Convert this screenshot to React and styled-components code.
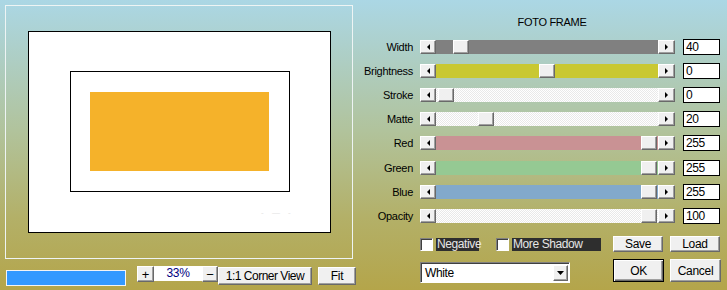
import React from 'react';
import styled, { createGlobalStyle, css } from 'styled-components';

const Global = createGlobalStyle`
  html, body { margin: 0; padding: 0; }
  body { width: 727px; height: 290px; overflow: hidden; }
`;

const raised = css`
  box-sizing: border-box;
  background: #f0f0f0;
  border: 1px solid;
  border-color: #ffffff #696969 #696969 #ffffff;
  box-shadow: inset -1px -1px 0 #a0a0a0;
`;

const sunken = css`
  box-sizing: border-box;
  background: #ffffff;
  border: 1px solid;
  border-color: #808080 #ffffff #ffffff #808080;
  box-shadow: inset 1px 1px 0 #404040;
`;

const Window = styled.div`
  width: 727px;
  height: 290px;
  display: flex;
  box-sizing: border-box;
  background: linear-gradient(to bottom, #abd7e5 0%, #b1c39c 45%, #b3b068 75%, #b4a54a 100%);
  font-family: "Liberation Sans", Arial, sans-serif;
  font-size: 11px;
  letter-spacing: -0.3px;
  color: #000;
`;

/* ---------- left: preview ---------- */
const LeftColumn = styled.div`
  width: 360px;
  padding: 5px 0 0 5px;
  box-sizing: border-box;
  display: flex;
  flex-direction: column;
`;

const PreviewFrame = styled.div`
  width: 348px;
  height: 254px;
  box-sizing: border-box;
  border: 1px solid #eef4f4;
  display: flex;
  align-items: center;
  justify-content: center;
  padding-left: 1px;
`;

const Paper = styled.div`
  position: relative;
  width: 303px;
  height: 202px;
  box-sizing: border-box;
  background: #fff;
  border: 1px solid #000;
  display: flex;
  align-items: center;
  justify-content: center;
  padding-bottom: 1px;
`;

const StrokeBox = styled.div`
  width: 220px;
  height: 121px;
  box-sizing: border-box;
  border: 1px solid #000;
  display: flex;
  align-items: center;
  justify-content: center;
`;

const Photo = styled.div`
  width: 179px;
  height: 79px;
  background: #f5b22a;
`;

const Marks = styled.span`
  position: absolute;
  left: 232px;
  top: 176px;
  font-size: 8px;
  letter-spacing: 3px;
  color: #e2e2e2;
`;

const Toolbar = styled.div`
  display: flex;
  align-items: flex-start;
  margin-top: 7px;
`;

const Progress = styled.div`
  width: 120px;
  height: 16px;
  margin: 4px 0 0 1px;
  box-sizing: border-box;
  border: 1px solid #f4f4f4;
  background: #3399ff;
`;

const SmallButton = styled.button`
  ${raised};
  width: ${p => p.$w}px;
  height: ${p => p.$h}px;
  margin: ${p => p.$m || 0};
  padding: 0;
  font-family: inherit;
  font-size: ${p => p.$fs || 11}px;
  letter-spacing: ${p => (p.$tight ? '-0.5px' : '-0.3px')};
  color: #000;
  display: flex;
  align-items: center;
  justify-content: center;
  line-height: 1;
`;

const ZoomField = styled.div`
  width: 48px;
  height: 15px;
  background: #fff;
  color: #000080;
  font-size: 12px;
  line-height: 15px;
  text-align: center;
  letter-spacing: -0.4px;
`;

/* ---------- right: controls ---------- */
const RightColumn = styled.div`
  flex: 1;
  padding-top: 14px;
  display: flex;
  flex-direction: column;
`;

const Title = styled.div`
  padding-left: 17px;
  text-align: center;
  height: 16px;
  line-height: 16px;
  margin-bottom: 4.5px;
`;

const Row = styled.div`
  display: flex;
  align-items: center;
  height: 24.2px;
`;

const Label = styled.div`
  width: 53px;
  margin-right: 7px;
  text-align: right;
  white-space: nowrap;
`;

const Slider = styled.div`
  display: flex;
  width: 255px;
  height: 14px;
`;

const ArrowButton = styled.div`
  ${raised};
  width: ${p => p.$w}px;
  height: 14px;
  display: flex;
  align-items: center;
  justify-content: center;
`;

const dither = css`
  background-color: #f6f6f6;
  background-image: repeating-conic-gradient(#ffffff 0 25%, #e9e9e9 0 50%);
  background-size: 2px 2px;
`;

const Track = styled.div`
  position: relative;
  flex: 1;
  height: 14px;
  ${p => (p.$color ? css`background: ${p.$color};` : dither)}
`;

const Thumb = styled.div`
  ${raised};
  position: absolute;
  top: 0;
  left: ${p => p.$pos}px;
  width: 16px;
  height: 14px;
`;

const ValueBox = styled.div`
  box-sizing: border-box;
  margin-left: 8px;
  width: 37px;
  height: 16px;
  background: #fff;
  border: 1px solid #000;
  padding-left: 2px;
  line-height: 14px;
  font-size: 12px;
  letter-spacing: -0.4px;
`;

const OptionsRow = styled.div`
  display: flex;
  align-items: center;
  height: 16px;
  margin-top: 8px;
  padding-left: 60px;
`;

const CheckBox = styled.div`
  ${sunken};
  width: 13px;
  height: 13px;
  margin-right: 3px;
`;

const DarkLabel = styled.div`
  box-sizing: border-box;
  height: 13px;
  line-height: 13px;
  width: ${p => p.$w}px;
  padding-left: 1px;
  background: #2e2e2e;
  color: #e6e6e6;
  margin-right: ${p => p.$mr}px;
  font-size: 12px;
  letter-spacing: -0.4px;
  white-space: nowrap;
`;

const DialogButton = styled.button`
  ${raised};
  width: ${p => p.$w}px;
  height: ${p => p.$h}px;
  margin-left: ${p => p.$ml || 0}px;
  margin-top: ${p => p.$mt || 0}px;
  padding: 0;
  font-family: inherit;
  font-size: 12px;
  letter-spacing: -0.3px;
  color: #000;
  display: flex;
  align-items: center;
  justify-content: center;
  ${p => p.$default && css`
    border-color: #000;
    box-shadow: inset 1px 1px 0 #ffffff, inset -1px -1px 0 #696969, inset -2px -2px 0 #a0a0a0;
  `}
`;

const BottomRow = styled.div`
  display: flex;
  align-items: flex-start;
  margin-top: 7px;
  padding-left: 60px;
`;

const Select = styled.div`
  ${sunken};
  width: 150px;
  height: 21px;
  margin-top: 3px;
  margin-right: 43px;
  display: flex;
  align-items: center;
  justify-content: space-between;
  padding: 0 1px 0 4px;
  font-size: 12px;
  letter-spacing: -0.4px;
`;

const SelectArrow = styled.div`
  ${raised};
  width: 15px;
  height: 16px;
  display: flex;
  align-items: center;
  justify-content: center;
`;

const Tri = ({ dir }) => {
  const pts = dir === 'left' ? '3,0 3,6 0,3' : dir === 'right' ? '0,0 0,6 3,3' : '0,0 7,0 3.5,4';
  const w = dir === 'down' ? 7 : 3;
  const h = dir === 'down' ? 4 : 6;
  return (
    <svg width={w} height={h} viewBox={`0 0 ${w} ${h}`}>
      <polygon points={pts} fill="#000" />
    </svg>
  );
};

const sliders = [
  { name: 'Width', value: '40', color: '#808080', pos: 17 },
  { name: 'Brightness', value: '0', color: '#c9c832', pos: 103 },
  { name: 'Stroke', value: '0', color: null, pos: 2 },
  { name: 'Matte', value: '20', color: null, pos: 42 },
  { name: 'Red', value: '255', color: '#c99294', pos: 205 },
  { name: 'Green', value: '255', color: '#95c993', pos: 205 },
  { name: 'Blue', value: '255', color: '#82a9cb', pos: 205 },
  { name: 'Opacity', value: '100', color: null, pos: 205 },
];

export default function App() {
  return (
    <Window>
      <Global />
      <LeftColumn>
        <PreviewFrame>
          <Paper>
            <StrokeBox>
              <Photo />
            </StrokeBox>
            <Marks>- — -</Marks>
          </Paper>
        </PreviewFrame>
        <Toolbar>
          <Progress />
          <SmallButton $w={17} $h={16} $m="0 0 0 11px" $fs={13}>+</SmallButton>
          <ZoomField>33%</ZoomField>
          <SmallButton $w={16} $h={16} $fs={13}>−</SmallButton>
          <SmallButton $w={94} $h={18} $m="1px 0 0 0" $fs={12} $tight>1:1 Corner View</SmallButton>
          <SmallButton $w={38} $h={18} $m="1px 0 0 6px" $fs={12}>Fit</SmallButton>
        </Toolbar>
      </LeftColumn>

      <RightColumn>
        <Title>FOTO FRAME</Title>
        {sliders.map(s => (
          <Row key={s.name}>
            <Label>{s.name}</Label>
            <Slider>
              <ArrowButton $w={16}><Tri dir="left" /></ArrowButton>
              <Track $color={s.color}>
                <Thumb $pos={s.pos} />
              </Track>
              <ArrowButton $w={17}><Tri dir="right" /></ArrowButton>
            </Slider>
            <ValueBox>{s.value}</ValueBox>
          </Row>
        ))}
        <OptionsRow>
          <CheckBox />
          <DarkLabel $w={43} $mr={17}>Negative</DarkLabel>
          <CheckBox />
          <DarkLabel $w={89} $mr={12}>More Shadow</DarkLabel>
          <DialogButton $w={50} $h={16}>Save</DialogButton>
          <DialogButton $w={50} $h={16} $ml={7}>Load</DialogButton>
        </OptionsRow>
        <BottomRow>
          <Select>
            <span>White</span>
            <SelectArrow><Tri dir="down" /></SelectArrow>
          </Select>
          <DialogButton $w={51} $h={23} $default>OK</DialogButton>
          <DialogButton $w={51} $h={23} $ml={6}>Cancel</DialogButton>
        </BottomRow>
      </RightColumn>
    </Window>
  );
}
